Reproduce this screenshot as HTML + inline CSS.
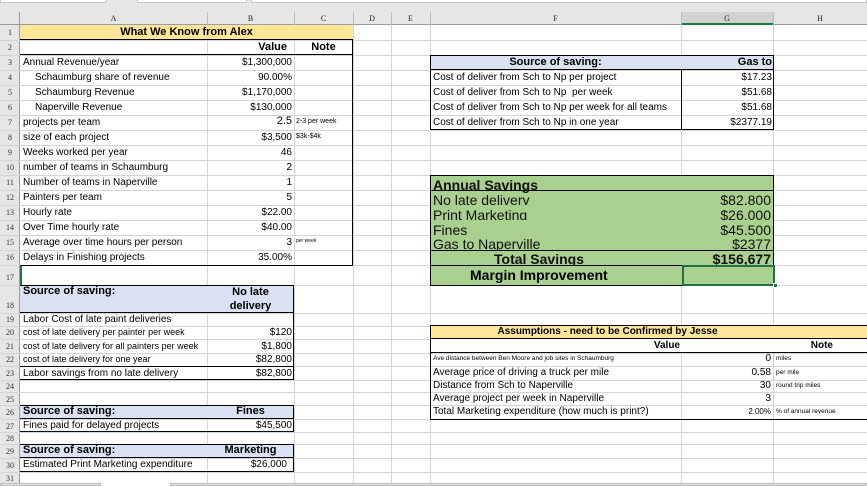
<!DOCTYPE html>
<html><head><meta charset="utf-8"><style>
*{margin:0;padding:0;box-sizing:border-box}
body{width:867px;height:486px;overflow:hidden;background:#fff;position:relative;font-family:"Liberation Sans",sans-serif;font-size:10px;color:#000}
div{position:absolute}
.h{left:0;width:867px;height:1px;background:#d4d4d4}
.v{top:25px;width:1px;height:460px;background:#d4d4d4}
.t{white-space:nowrap;line-height:13px}
.r{text-align:right;white-space:nowrap;line-height:13px}
.b{font-weight:bold}
.rn{left:0;width:20px;text-align:center;font-size:8px;color:#333;font-family:"Liberation Serif",serif;line-height:13px}
.bx{border:1px solid #000}
.ch{top:12px;height:13px;text-align:center;font-size:8px;font-family:"Liberation Serif",serif;line-height:13px;color:#222}
.sm{font-size:7px}
</style></head><body>
<!-- top bars -->
<div style="left:0;top:0;width:867px;height:25px;background:#e6e6e6"></div>
<div style="left:0;top:0;width:107px;height:3px;background:#fff;border:1px solid #c6c6c6;border-top:none"></div>
<div style="left:137px;top:0;width:110px;height:3px;background:#fff;border:1px solid #c6c6c6;border-top:none"></div>
<div style="left:251px;top:0;width:616px;height:3px;background:#fff;border:1px solid #c6c6c6;border-top:none"></div>
<div style="left:0;top:25px;width:20px;height:460px;background:#e6e6e6"></div>
<div style="left:0;top:24px;width:867px;height:1px;background:#9b9b9b"></div>
<div style="left:19px;top:12px;width:1px;height:473px;background:#9b9b9b"></div>
<div style="left:681px;top:12px;width:92px;height:13px;background:#d2d2d2;border-bottom:2px solid #217346"></div>
<div class="ch" style="left:20px;width:187px">A</div>
<div class="ch" style="left:207px;width:87px">B</div>
<div class="ch" style="left:294px;width:59px">C</div>
<div class="ch" style="left:353px;width:38px">D</div>
<div class="ch" style="left:391px;width:39px">E</div>
<div class="ch" style="left:430px;width:251px">F</div>
<div class="ch" style="left:681px;width:92px">G</div>
<div class="ch" style="left:773px;width:94px">H</div>
<div style="left:207px;top:12px;width:1px;height:13px;background:#bbb"></div>
<div style="left:294px;top:12px;width:1px;height:13px;background:#bbb"></div>
<div style="left:353px;top:12px;width:1px;height:13px;background:#bbb"></div>
<div style="left:391px;top:12px;width:1px;height:13px;background:#bbb"></div>
<div style="left:430px;top:12px;width:1px;height:13px;background:#bbb"></div>
<div style="left:681px;top:12px;width:1px;height:13px;background:#bbb"></div>
<div style="left:773px;top:12px;width:1px;height:13px;background:#bbb"></div>

<!-- grid -->
<div class="v" style="left:207px"></div><div class="v" style="left:294px"></div><div class="v" style="left:353px"></div>
<div class="v" style="left:391px"></div><div class="v" style="left:430px"></div><div class="v" style="left:681px"></div><div class="v" style="left:773px"></div>
<div class="h" style="top:40px"></div><div class="h" style="top:55px"></div><div class="h" style="top:70px"></div><div class="h" style="top:85px"></div>
<div class="h" style="top:100px"></div><div class="h" style="top:115px"></div><div class="h" style="top:130px"></div><div class="h" style="top:145px"></div>
<div class="h" style="top:160px"></div><div class="h" style="top:175px"></div><div class="h" style="top:190px"></div><div class="h" style="top:205px"></div>
<div class="h" style="top:220px"></div><div class="h" style="top:235px"></div><div class="h" style="top:250px"></div><div class="h" style="top:265px"></div>
<div class="h" style="top:285px"></div><div class="h" style="top:313px"></div><div class="h" style="top:326px"></div><div class="h" style="top:339px"></div>
<div class="h" style="top:353px"></div><div class="h" style="top:366px"></div><div class="h" style="top:380px"></div><div class="h" style="top:392px"></div>
<div class="h" style="top:405px"></div><div class="h" style="top:419px"></div><div class="h" style="top:432px"></div><div class="h" style="top:444px"></div>
<div class="h" style="top:458px"></div><div class="h" style="top:472px"></div>

<!-- row numbers -->
<div class="rn" style="top:26px">1</div><div class="rn" style="top:41px">2</div><div class="rn" style="top:56px">3</div><div class="rn" style="top:71px">4</div>
<div class="rn" style="top:86px">5</div><div class="rn" style="top:101px">6</div><div class="rn" style="top:116px">7</div><div class="rn" style="top:131px">8</div>
<div class="rn" style="top:146px">9</div><div class="rn" style="top:161px">10</div><div class="rn" style="top:176px">11</div><div class="rn" style="top:191px">12</div>
<div class="rn" style="top:206px">13</div><div class="rn" style="top:221px">14</div><div class="rn" style="top:236px">15</div><div class="rn" style="top:251px">16</div>
<div class="rn" style="top:271px">17</div><div class="rn" style="top:299px">18</div><div class="rn" style="top:313px">19</div><div class="rn" style="top:326px">20</div>
<div class="rn" style="top:340px">21</div><div class="rn" style="top:353px">22</div><div class="rn" style="top:367px">23</div><div class="rn" style="top:380px">24</div>
<div class="rn" style="top:393px">25</div><div class="rn" style="top:406px">26</div><div class="rn" style="top:420px">27</div><div class="rn" style="top:432px">28</div>
<div class="rn" style="top:445px">29</div><div class="rn" style="top:459px">30</div><div class="rn" style="top:472px">31</div>

<!-- What we know table -->
<div style="left:20px;top:25px;width:333px;height:15px;background:#ffe699;border-bottom:1px solid #000"></div>
<div class="t b" style="left:20px;top:26px;width:333px;text-align:center;font-size:11px">What We Know from Alex</div>
<div style="left:20px;top:40px;width:333px;height:226px;border-right:1px solid #000;border-bottom:1px solid #000"></div>
<div style="left:20px;top:54px;width:333px;height:1px;background:#000"></div>
<div class="r b" style="left:207px;top:41px;width:80px;font-size:11px">Value</div>
<div class="t b" style="left:294px;top:41px;width:59px;text-align:center;font-size:11px">Note</div>
<div class="t" style="left:23px;top:56px">Annual Revenue/year</div><div class="r" style="left:207px;top:56px;width:85px">$1,300,000</div>
<div class="t" style="left:35px;top:71px">Schaumburg share of revenue</div><div class="r" style="left:207px;top:71px;width:85px">90.00%</div>
<div class="t" style="left:35px;top:86px">Schaumburg Revenue</div><div class="r" style="left:207px;top:86px;width:85px">$1,170,000</div>
<div class="t" style="left:35px;top:101px">Naperville Revenue</div><div class="r" style="left:207px;top:101px;width:85px">$130,000</div>
<div class="t" style="left:23px;top:116px">projects per team</div><div class="r" style="left:207px;top:115px;width:85px;font-size:11px">2.5</div><div class="t sm" style="left:296px;top:115px">2-3 per week</div>
<div class="t" style="left:23px;top:131px">size of each project</div><div class="r" style="left:207px;top:131px;width:85px">$3,500</div><div class="t sm" style="left:296px;top:130px">$3k-$4k</div>
<div class="t" style="left:23px;top:146px">Weeks worked per year</div><div class="r" style="left:207px;top:146px;width:85px">46</div>
<div class="t" style="left:23px;top:161px">number of teams in Schaumburg</div><div class="r" style="left:207px;top:161px;width:85px">2</div>
<div class="t" style="left:23px;top:176px">Number of teams in Naperville</div><div class="r" style="left:207px;top:176px;width:85px">1</div>
<div class="t" style="left:23px;top:191px">Painters per team</div><div class="r" style="left:207px;top:191px;width:85px">5</div>
<div class="t" style="left:23px;top:206px">Hourly rate</div><div class="r" style="left:207px;top:206px;width:85px">$22.00</div>
<div class="t" style="left:23px;top:221px">Over Time hourly rate</div><div class="r" style="left:207px;top:221px;width:85px">$40.00</div>
<div class="t" style="left:23px;top:236px">Average over time hours per person</div><div class="r" style="left:207px;top:236px;width:85px">3</div><div class="t" style="left:296px;top:235px;font-size:5px">per week</div>
<div class="t" style="left:23px;top:251px">Delays in Finishing projects</div><div class="r" style="left:207px;top:251px;width:85px">35.00%</div>
<div style="left:20px;top:266px;width:2px;height:19px;background:#217346"></div>

<!-- No late delivery -->
<div style="left:20px;top:285px;width:274px;height:28px;background:#d9e1f2;border:1px solid #000;border-left:none"></div>
<div class="t b" style="left:23px;top:285px;font-size:11px">Source of saving:</div>
<div class="t b" style="left:207px;top:285px;width:87px;text-align:center;font-size:11px;line-height:14px">No late<br>delivery</div>
<div style="left:20px;top:313px;width:274px;height:54px;border-right:1px solid #000;border-bottom:1px solid #000"></div>
<div style="left:20px;top:366px;width:274px;height:14px;border-right:1px solid #000;border-bottom:1px solid #000"></div>
<div class="t" style="left:23px;top:313px">Labor Cost of late paint deliveries</div>
<div class="t" style="left:23px;top:326px;font-size:9px">cost of late delivery per painter per week</div><div class="r" style="left:207px;top:326px;width:85px">$120</div>
<div class="t" style="left:23px;top:340px;font-size:9px">cost of late delivery for all painters per week</div><div class="r" style="left:207px;top:340px;width:85px">$1,800</div>
<div class="t" style="left:23px;top:353px;font-size:9px">cost of late delivery for one year</div><div class="r" style="left:207px;top:353px;width:85px">$82,800</div>
<div class="t" style="left:23px;top:367px">Labor savings from no late delivery</div><div class="r" style="left:207px;top:367px;width:85px">$82,800</div>

<!-- Fines -->
<div style="left:20px;top:405px;width:274px;height:14px;background:#d9e1f2;border:1px solid #000;border-left:none"></div>
<div class="t b" style="left:23px;top:405px;font-size:11px">Source of saving:</div><div class="t b" style="left:207px;top:405px;width:87px;text-align:center;font-size:11px">Fines</div>
<div style="left:20px;top:418px;width:274px;height:14px;border-right:1px solid #000;border-bottom:1px solid #000"></div>
<div class="t" style="left:23px;top:419px">Fines paid for delayed projects</div><div class="r" style="left:207px;top:419px;width:85px">$45,500</div>

<!-- Marketing -->
<div style="left:20px;top:444px;width:274px;height:14px;background:#d9e1f2;border:1px solid #000;border-left:none"></div>
<div class="t b" style="left:23px;top:444px;font-size:11px">Source of saving:</div><div class="t b" style="left:207px;top:444px;width:87px;text-align:center;font-size:11px">Marketing</div>
<div style="left:20px;top:457px;width:274px;height:15px;border-right:1px solid #000;border-bottom:1px solid #000"></div>
<div class="t" style="left:23px;top:458px">Estimated Print Marketing expenditure</div><div class="r" style="left:207px;top:458px;width:80px">$26,000</div>

<!-- Gas table -->
<div style="left:430px;top:55px;width:344px;height:15px;background:#d9e1f2;border:1px solid #000"></div>
<div class="t b" style="left:430px;top:56px;width:251px;text-align:center;font-size:11px">Source of saving:</div>
<div class="r b" style="left:681px;top:56px;width:91px;font-size:11px">Gas to</div>
<div style="left:430px;top:69px;width:344px;height:61px;border:1px solid #000"></div>
<div style="left:681px;top:69px;width:1px;height:61px;background:#000"></div>
<div class="t" style="left:433px;top:71px">Cost of deliver from Sch to Np per project</div><div class="r" style="left:681px;top:71px;width:91px">$17.23</div>
<div class="t" style="left:433px;top:86px">Cost of deliver from Sch to Np&nbsp; per week</div><div class="r" style="left:681px;top:86px;width:91px">$51.68</div>
<div class="t" style="left:433px;top:101px">Cost of deliver from Sch to Np per week for all teams</div><div class="r" style="left:681px;top:101px;width:91px">$51.68</div>
<div class="t" style="left:433px;top:116px">Cost of deliver from Sch to Np in one year</div><div class="r" style="left:681px;top:116px;width:91px">$2377.19</div>

<!-- Annual savings -->
<div style="left:430px;top:175px;width:344px;height:111px;background:#a9d08e;border:1px solid #000;overflow:hidden"></div>
<div style="left:430px;top:190px;width:344px;height:1px;background:#000"></div>
<div style="left:430px;top:250px;width:344px;height:1px;background:#000"></div>
<div style="left:430px;top:265px;width:344px;height:1px;background:#000"></div>
<div style="left:431px;top:176px;width:342px;height:89px;overflow:hidden;font-size:14px;line-height:15px;color:#111">
 <div class="t b" style="left:2px;top:2px;font-size:14px;line-height:15px">Annual Savings</div>
 <div class="t" style="left:2px;top:17px;font-size:14px;line-height:15px;height:12px;overflow:hidden">No late delivery</div><div class="r" style="left:250px;top:17px;width:90px;font-size:14px;line-height:15px;height:12px;overflow:hidden">$82,800</div>
 <div class="t" style="left:2px;top:32px;font-size:14px;line-height:15px;height:12px;overflow:hidden">Print Marketing</div><div class="r" style="left:250px;top:32px;width:90px;font-size:14px;line-height:15px;height:12px;overflow:hidden">$26,000</div>
 <div class="t" style="left:2px;top:47px;font-size:14px;line-height:15px;height:12px;overflow:hidden">Fines</div><div class="r" style="left:250px;top:47px;width:90px;font-size:14px;line-height:15px;height:12px;overflow:hidden">$45,500</div>
 <div class="t" style="left:2px;top:61px;font-size:14px;line-height:15px;height:13px;overflow:hidden">Gas to Naperville</div><div class="r" style="left:250px;top:61px;width:90px;font-size:14px;line-height:15px;height:13px;overflow:hidden">$2377</div>
 <div class="t b" style="left:63px;top:76px;font-size:14px;line-height:15px;height:13px;overflow:hidden">Total Savings</div><div class="r b" style="left:250px;top:76px;width:90px;font-size:14px;line-height:15px;height:13px;overflow:hidden">$156,677</div>
</div>
<div class="t b" style="left:470px;top:268px;font-size:14px;line-height:15px">Margin Improvement</div>
<div style="left:682px;top:265px;width:93px;height:21px;border:2px solid #217346"></div>
<div style="left:773px;top:283px;width:5px;height:5px;background:#217346;border:1px solid #fff"></div>

<!-- Assumptions -->
<div style="left:430px;top:325px;width:437px;height:95px;border:1px solid #000;border-right:none"></div>
<div style="left:430px;top:325px;width:437px;height:14px;background:#ffe699;border:1px solid #000;border-right:none"></div>
<div class="t b" style="left:430px;top:325px;width:355px;text-align:center;font-size:10px">Assumptions - need to be Confirmed by Jesse</div>
<div style="left:430px;top:352px;width:437px;height:1px;background:#000"></div>
<div style="left:430px;top:339px;width:437px;height:14px;background:#fff;border-bottom:1px solid #000;border-left:1px solid #000"></div>
<div class="r b" style="left:430px;top:339px;width:250px;font-size:10px">Value</div>
<div class="r b" style="left:773px;top:339px;width:60px;font-size:10px">Note</div>
<div class="t" style="left:433px;top:352px;font-size:6.5px">Ave distance between Ben Moore and job sites in Schaumburg</div><div class="r" style="left:681px;top:352px;width:90px">0</div><div class="t" style="left:776px;top:352px;font-size:6.5px">miles</div>
<div class="t" style="left:433px;top:366px">Average price of driving a truck per mile</div><div class="r" style="left:681px;top:366px;width:90px">0.58</div><div class="t" style="left:776px;top:366px;font-size:6.5px">per mile</div>
<div class="t" style="left:433px;top:379px">Distance from Sch to Naperville</div><div class="r" style="left:681px;top:379px;width:90px">30</div><div class="t" style="left:776px;top:379px;font-size:6.5px">round trip miles</div>
<div class="t" style="left:433px;top:392px">Average project per week in Naperville</div><div class="r" style="left:681px;top:392px;width:90px">3</div>
<div class="t" style="left:433px;top:405px">Total Marketing expenditure (how much is print?)</div><div class="r" style="left:681px;top:405px;width:90px;font-size:8px">2.00%</div><div class="t" style="left:776px;top:405px;font-size:6.5px">% of annual revenue</div>

<!-- bottom -->
<div style="left:0;top:483px;width:101px;height:3px;background:#e6e6e6;border:1px solid #bbb"></div>
<div style="left:170px;top:483px;width:697px;height:3px;background:#e6e6e6;border:1px solid #bbb"></div>
</body></html>
